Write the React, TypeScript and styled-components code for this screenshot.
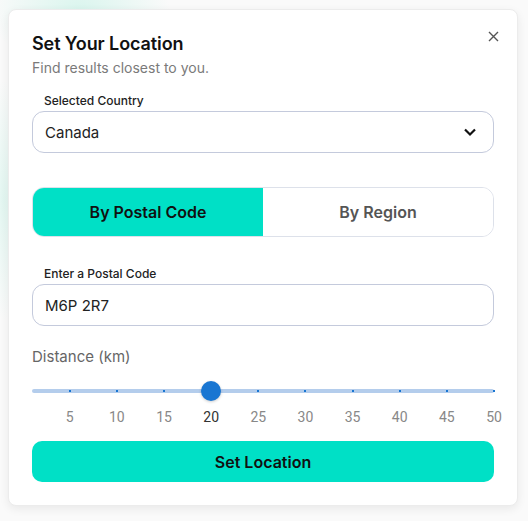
import React, { useState } from 'react'
import styled, { createGlobalStyle } from 'styled-components'

const GlobalStyle = createGlobalStyle`
	html, body {
		margin: 0;
		padding: 0;
		background: #fafafa;
		font-family: Inter, 'Noto Sans', sans-serif;
	}
`

const MIN = 1
const MAX = 50
const MARKS = [5, 10, 15, 20, 25, 30, 35, 40, 45, 50]

const LocationDialog: React.FC = () => {
	const [mode, setMode] = useState<'postal' | 'region'>('postal')
	const [distance] = useState(20)
	const pct = (v: number) => ((v - MIN) / (MAX - MIN)) * 100

	return (
		<Page>
			<Card>
				<Header>
					<div>
						<Title>Set Your Location</Title>
						<Subtitle>Find results closest to you.</Subtitle>
					</div>
					<CloseButton aria-label="close">
						<svg width="11" height="11" viewBox="0 0 11 11">
							<path d="M1 1 L10 10 M10 1 L1 10" stroke="#555" strokeWidth="1.4" />
						</svg>
					</CloseButton>
				</Header>

				<Field gap={17}>
					<FieldLabel>Selected Country</FieldLabel>
					<InputBox>
						<span>Canada</span>
						<svg width="14" height="10" viewBox="0 0 14 10">
							<path d="M2 2.5 L7 7.5 L12 2.5" stroke="#111" strokeWidth="2.2" fill="none" />
						</svg>
					</InputBox>
				</Field>

				<Tabs>
					<Tab active={mode === 'postal'} onClick={() => setMode('postal')}>By Postal Code</Tab>
					<Tab active={mode === 'region'} onClick={() => setMode('region')}>By Region</Tab>
				</Tabs>

				<Field gap={30}>
					<FieldLabel>Enter a Postal Code</FieldLabel>
					<InputBox>
						<span>M6P 2R7</span>
					</InputBox>
				</Field>

				<SliderSection>
					<SliderLabel>Distance (km)</SliderLabel>
					<SliderArea>
						<Track />
						{MARKS.map(m => (
							<Tick key={m} style={{ left: `${pct(m)}%` }} />
						))}
						<Thumb style={{ left: `${pct(distance)}%` }} />
						{MARKS.map(m => (
							<MarkLabel key={m} active={m === distance} style={{ left: `${pct(m)}%` }}>
								{m}
							</MarkLabel>
						))}
					</SliderArea>
				</SliderSection>

				<SubmitButton>Set Location</SubmitButton>
			</Card>
		</Page>
	)
}

const Page = styled.div`
	width: 528px;
	height: 521px;
	box-sizing: border-box;
	padding: 9px 10px 15px 8px;
	background:
		radial-gradient(ellipse 90px 60px at 80px 10px, rgba(120, 230, 200, 0.25), transparent),
		radial-gradient(ellipse 30px 120px at 4px 200px, rgba(120, 230, 200, 0.18), transparent),
		#fafafa;
`

const Card = styled.div`
	box-sizing: border-box;
	height: 497px;
	background: #fff;
	border-radius: 8px;
	border: 1px solid #ececec;
	box-shadow: 0 3px 10px rgba(0, 0, 0, 0.07);
	padding: 23px 23px 0 23px;
	display: flex;
	flex-direction: column;
`

const Header = styled.div`
	display: flex;
	justify-content: space-between;
	align-items: flex-start;
`

const Title = styled.h2`
	margin: 0;
	font-size: 18px;
	font-weight: 600;
	color: #111;
	line-height: 22px;
	letter-spacing: -0.1px;
`

const Subtitle = styled.p`
	margin: 4px 0 0;
	font-size: 14px;
	color: #7a7a7a;
	line-height: 18px;
`

const CloseButton = styled.button`
	border: none;
	background: none;
	padding: 0;
	margin: -4px -6px 0 0;
	width: 14px;
	height: 14px;
	display: flex;
	align-items: center;
	justify-content: center;
	cursor: pointer;
`

const Field = styled.div<{ gap: number }>`
	margin-top: ${p => p.gap}px;
	display: flex;
	flex-direction: column;
`

const FieldLabel = styled.label`
	font-size: 12px;
	font-weight: 500;
	color: #222;
	padding-left: 12px;
	line-height: 14px;
	margin-bottom: 3px;
`

const InputBox = styled.div`
	box-sizing: border-box;
	height: 42px;
	border: 1px solid #c4cadc;
	border-radius: 12px;
	padding: 0 16px 0 12px;
	display: flex;
	align-items: center;
	justify-content: space-between;
	font-size: 15px;
	color: #222;
`

const Tabs = styled.div`
	margin-top: 34px;
	display: grid;
	grid-template-columns: 1fr 1fr;
	height: 50px;
	box-sizing: border-box;
	border: 1px solid #dde1ea;
	border-radius: 12px;
	overflow: hidden;
`

const Tab = styled.button<{ active: boolean }>`
	border: none;
	font-family: inherit;
	font-size: 16px;
	font-weight: 600;
	background: ${p => (p.active ? '#00e0c6' : '#fff')};
	color: ${p => (p.active ? '#111' : '#555')};
	cursor: pointer;
`

const SliderSection = styled.div`
	margin-top: 21px;
`

const SliderLabel = styled.div`
	font-size: 15px;
	color: #666;
	line-height: 20px;
`

const SliderArea = styled.div`
	position: relative;
	height: 63px;
	margin-top: 11px;
`

const Track = styled.div`
	position: absolute;
	left: 0;
	right: 0;
	top: 11px;
	height: 4px;
	border-radius: 2px;
	background: #b4cdec;
`

const Tick = styled.span`
	position: absolute;
	top: 12px;
	width: 2px;
	height: 2px;
	margin-left: -1px;
	background: #1976d2;
`

const Thumb = styled.span`
	position: absolute;
	top: 3px;
	width: 20px;
	height: 20px;
	margin-left: -10px;
	border-radius: 50%;
	background: #1976d2;
	box-shadow: 0 1px 3px rgba(0, 0, 0, 0.2);
`

const MarkLabel = styled.span<{ active: boolean }>`
	position: absolute;
	top: 31px;
	transform: translateX(-50%);
	font-family: Roboto, sans-serif;
	font-size: 14px;
	color: ${p => (p.active ? '#333' : '#888')};
`

const SubmitButton = styled.button`
	margin-top: 0;
	height: 41px;
	border: none;
	border-radius: 10px;
	background: #00e0c6;
	font-family: inherit;
	font-size: 16px;
	font-weight: 600;
	color: #111;
	cursor: pointer;
`

const App: React.FC = () => (
	<>
		<GlobalStyle />
		<LocationDialog />
	</>
)

export default App
